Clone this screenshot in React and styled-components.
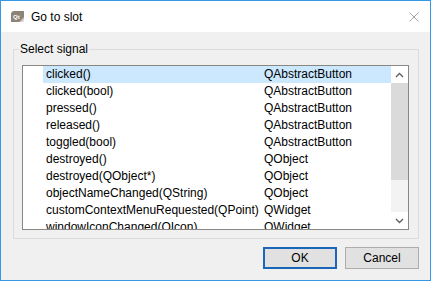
import React from "react";
import styled, { createGlobalStyle } from "styled-components";

const GlobalStyle = createGlobalStyle`
  html, body {
    margin: 0;
    padding: 0;
    background: #ffffff;
  }
`;

const Window = styled.div`
  width: 431px;
  height: 281px;
  box-sizing: border-box;
  border: 1px solid #3399e6;
  display: flex;
  flex-direction: column;
  background: #f0f0f0;
  font-family: "Liberation Sans", Arial, sans-serif;
  font-size: 12px;
  color: #000;
`;

const TitleBar = styled.div`
  height: 31px;
  flex: none;
  background: #ffffff;
  display: flex;
  align-items: center;
  padding: 0 11px 0 9px;
`;

const Title = styled.span`
  margin-left: 5px;
  flex: 1;
`;

const Body = styled.div`
  flex: 1;
  display: flex;
  flex-direction: column;
  padding: 9px 11px 0 12px;
`;

const GroupBox = styled.fieldset`
  margin: 0;
  padding: 8px 9px 8px 8px;
  border: 1px solid #dcdcdc;
  min-width: 0;
`;

const GroupLabel = styled.legend`
  padding: 0 1px;
  margin-left: -3px;
  line-height: 16px;
`;

const ListBox = styled.div`
  height: 165px;
  box-sizing: border-box;
  border: 1px solid #8a8782;
  background: #ffffff;
  display: flex;
`;

const Rows = styled.div`
  flex: 1;
  overflow: hidden;
  padding-left: 20px;
`;

const Row = styled.div`
  display: grid;
  grid-template-columns: 218px 1fr;
  height: 17px;
  line-height: 17px;
  white-space: nowrap;
  background: ${(p) => (p.$selected ? "#cce8ff" : "transparent")};
`;

const Cell = styled.span`
  padding-left: 3px;
  overflow: visible;
`;

const ScrollBar = styled.div`
  width: 17px;
  flex: none;
  display: flex;
  flex-direction: column;
  background: #f0f0f0;
`;

const ArrowButton = styled.div`
  height: 17px;
  flex: none;
  display: flex;
  align-items: center;
  justify-content: center;
  background: #ffffff;
`;

const Thumb = styled.div`
  height: 97px;
  flex: none;
  background: #dadada;
`;

const Track = styled.div`
  flex: 1;
  background: #f3f3f3;
`;

const ButtonRow = styled.div`
  display: flex;
  justify-content: flex-end;
  gap: 8px;
  margin-top: 8px;
`;

const Button = styled.button`
  width: 74px;
  height: 22px;
  box-sizing: border-box;
  padding: 0;
  font-family: inherit;
  font-size: 12px;
  color: #000;
  background: #e1e1e1;
  border: ${(p) => (p.$default ? "2px solid #1a66b8" : "1px solid #adadad")};
`;

const signals = [
  ["clicked()", "QAbstractButton"],
  ["clicked(bool)", "QAbstractButton"],
  ["pressed()", "QAbstractButton"],
  ["released()", "QAbstractButton"],
  ["toggled(bool)", "QAbstractButton"],
  ["destroyed()", "QObject"],
  ["destroyed(QObject*)", "QObject"],
  ["objectNameChanged(QString)", "QObject"],
  ["customContextMenuRequested(QPoint)", "QWidget"],
  ["windowIconChanged(QIcon)", "QWidget"],
];

function QtIcon() {
  return (
    <svg width="16" height="16" viewBox="0 0 16 16">
      <path d="M1 4 L3 2 H14 V10 L11 13 H1 Z" fill="#8c8577" />
      <path d="M11 13 L14 10 V13 Z" fill="#dcd9d4" />
      <path d="M9 13 L14 8 V13 Z" fill="#e4e1dc" opacity="0.6" />
      <text x="3" y="9.5" fontSize="6" fontFamily="Liberation Sans, sans-serif" fontWeight="bold" fill="#ffffff">
        Qt
      </text>
    </svg>
  );
}

function CloseIcon() {
  return (
    <svg width="10" height="10" viewBox="0 0 10 10">
      <path d="M0.5 0.5 L9.5 9.5 M9.5 0.5 L0.5 9.5" stroke="#a8a8a8" strokeWidth="1" />
    </svg>
  );
}

function Chevron({ up }) {
  return (
    <svg width="9" height="6" viewBox="0 0 9 6">
      <polyline
        points={up ? "1,5 4.5,1.5 8,5" : "1,1 4.5,4.5 8,1"}
        fill="none"
        stroke="#606060"
        strokeWidth="1.4"
      />
    </svg>
  );
}

export default function App() {
  return (
    <>
      <GlobalStyle />
      <Window>
        <TitleBar>
          <QtIcon />
          <Title>Go to slot</Title>
          <CloseIcon />
        </TitleBar>
        <Body>
          <GroupBox>
            <GroupLabel>Select signal</GroupLabel>
            <ListBox>
              <Rows>
                {signals.map(([name, cls], i) => (
                  <Row key={name} $selected={i === 0}>
                    <Cell>{name}</Cell>
                    <Cell>{cls}</Cell>
                  </Row>
                ))}
              </Rows>
              <ScrollBar>
                <ArrowButton>
                  <Chevron up />
                </ArrowButton>
                <Thumb />
                <Track />
                <ArrowButton>
                  <Chevron />
                </ArrowButton>
              </ScrollBar>
            </ListBox>
          </GroupBox>
          <ButtonRow>
            <Button $default>OK</Button>
            <Button>Cancel</Button>
          </ButtonRow>
        </Body>
      </Window>
    </>
  );
}
